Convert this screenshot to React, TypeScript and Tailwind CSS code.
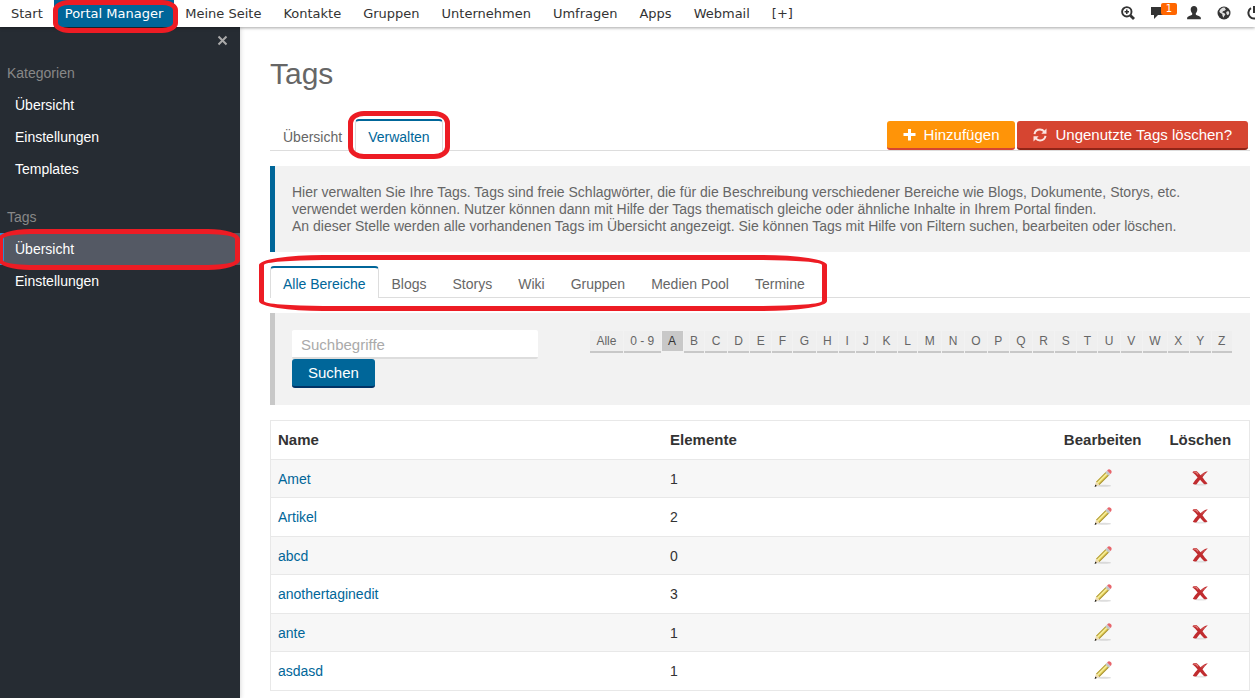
import clsx from "clsx";

const NAV_ITEMS = [
  "Start",
  "Portal Manager",
  "Meine Seite",
  "Kontakte",
  "Gruppen",
  "Unternehmen",
  "Umfragen",
  "Apps",
  "Webmail",
  "[+]",
];

const SIDEBAR_GROUPS = [
  { title: "Kategorien", items: ["Übersicht", "Einstellungen", "Templates"], active: "" },
  { title: "Tags", items: ["Übersicht", "Einstellungen"], active: "Übersicht" },
];

const AREAS = ["Alle Bereiche", "Blogs", "Storys", "Wiki", "Gruppen", "Medien Pool", "Termine"];

const LETTERS = ["Alle", "0 - 9", ..."ABCDEFGHIJKLMNOPQRSTUVWXYZ".split("")];

const TAGS = [
  { name: "Amet", count: 1 },
  { name: "Artikel", count: 2 },
  { name: "abcd", count: 0 },
  { name: "anothertaginedit", count: 3 },
  { name: "ante", count: 1 },
  { name: "asdasd", count: 1 },
];

// Red marker drawn around the steps the user has to click
function Marker({ className }: { className: string }) {
  return (
    <span
      className={clsx("pointer-events-none absolute z-20 border-5 border-[#ed1c24]", className)}
    />
  );
}

function SearchIcon() {
  return (
    <svg width="14" height="14" viewBox="0 0 14 14" fill="none" stroke="#333">
      <circle cx="5.8" cy="5.8" r="4.7" strokeWidth="1.9" />
      <path d="M3.6 5.8h4.4M5.8 3.6v4.4" strokeWidth="1.5" />
      <path d="M9.4 9.4l3.6 3.6" strokeWidth="2.8" />
    </svg>
  );
}

function CommentIcon() {
  return (
    <svg width="14" height="14" viewBox="0 0 14 14" fill="#333">
      <path d="M0 1h13v8H7l-4 4V9H0z" />
    </svg>
  );
}

function UserIcon() {
  return (
    <svg width="14" height="14" viewBox="0 0 14 14" fill="#333">
      <path d="M7 0c2 0 3.3 1.4 3.3 3.6 0 1.5-.6 2.9-1.5 3.7v1.2c0 .5 3 1.4 4.2 2.2.7.4.9 1 .9 2.600H.1c0-1.600.2-2.200.9-2.600C2.200 9.900 5.200 9 5.200 8.500V7.300C4.300 6.500 3.700 5.100 3.700 3.600 3.700 1.400 5 0 7 0z" />
    </svg>
  );
}

function GlobeIcon() {
  return (
    <svg width="14" height="14" viewBox="0 0 14 14">
      <circle cx="7" cy="7" r="6.500" fill="#333" />
      <path
        d="M6 1.500l2.500.3-.5 1 1 .6-1.500 1.300-1.500.5-.8 1.300 2 .6 1.200 1.300-1.300 1.800-.6 1.500-1-1.800-.3-1.900L3 6.800l-.7-1.300C2.900 3.600 4.200 2.200 6 1.500z"
        fill="#ddd"
      />
      <path d="M10 5.200l2 .2.2 2.300-1.200 1.600-1-.6-.9-1.900z" fill="#ddd" />
    </svg>
  );
}

function PowerIcon() {
  return (
    <svg width="14" height="14" viewBox="0 0 14 14" fill="none" stroke="#333" strokeWidth="2">
      <path d="M4 2.200a5.600 5.600 0 1 0 6 0M7 0v7" />
    </svg>
  );
}

function PlusIcon() {
  return (
    <svg width="13" height="13" viewBox="0 0 13 13" fill="#fff">
      <path d="M5 1h3v4h4.500v3H8v4.500H5V8H.5V5H5z" />
    </svg>
  );
}

function RefreshIcon() {
  return (
    <svg width="14" height="14" viewBox="0 0 14 14" fill="none" stroke="#fbe3df" strokeWidth="2">
      <path d="M1.500 6.200C2 3.300 4.300 1.600 7 1.600c1.900 0 3.300.8 4.300 2" />
      <path d="M12.500 7.800c-.5 2.900-2.800 4.600-5.500 4.600-1.900 0-3.300-.8-4.300-2" />
      <path d="M13.500.5v5.200H8.300z" fill="#fbe3df" stroke="none" />
      <path d="M.5 13.500V8.300h5.200z" fill="#fbe3df" stroke="none" />
    </svg>
  );
}

function PencilIcon() {
  return (
    <svg width="18" height="18" viewBox="0 0 18 18">
      <ellipse cx="10" cy="16.800" rx="7" ry="1" fill="#bbb" opacity="0.500" />
      <path d="M2 12.700L12 2.700l3.400 3.400L5.400 16z" fill="#e6d35c" />
      <path d="M2 12.700L12 2.700l.9.900L3 13.700z" fill="#b9a548" />
      <path d="M3 13.600L13 3.600l.8.800-10 10z" fill="#f8f0a0" />
      <path d="M4.700 15.300l10-10 .7.800-10 10z" fill="#a8923a" />
      <path d="M2 12.700l3.400 3.300-4.600 1.700z" fill="#ecd9ae" />
      <path d="M1.400 15.500l1.500 1.500-2.300.9z" fill="#111" />
      <path d="M11.300 3.400L13.100 1.600l3.400 3.400-1.800 1.800z" fill="#c3c8cc" />
      <path
        d="M13.100 1.600C14 .7 14.700.2 15.600.4c1.100.2 1.900 1.100 2 2 .1 1-.4 1.800-1.100 2.600z"
        fill="#e8656b"
      />
    </svg>
  );
}

function DeleteIcon() {
  return (
    <svg width="16" height="16" viewBox="0 0 16 16">
      <ellipse cx="9" cy="14.600" rx="6.500" ry="0.900" fill="#bbb" opacity="0.400" />
      <path
        d="M.4 2.300C1.400.8 3.700.7 5 1.400c1.300 1 2.500 2.400 3.500 3.900C10.300 3.300 12.900 1.500 15.800 1.200 13.600 3.100 11.900 5.200 10.500 7.300c1.400 2.100 3.100 4.200 5 6.300-1.200 1-2.900 1-3.800.1C10.400 12.300 9.200 11 8.100 9.700 6.800 11.300 5.600 12.900 4.600 14.200c-1.200.6-3 .5-3.800-.4C2 11.600 3.800 9.400 5.600 7.400 4.200 5.700 2.500 4.100.4 2.300z"
        fill="#c02c2f"
      />
      <path d="M1.600 2.300c1-.5 2-.4 2.800.2l1.800 1.900" fill="none" stroke="#de7f7c" strokeWidth="1.200" />
      <path d="M9.500 5.800L13 2.800" fill="none" stroke="#d46765" strokeWidth="0.800" />
    </svg>
  );
}

function Tab({ label, active }: { label: string; active?: boolean }) {
  return (
    <a
      href="#"
      className={clsx(
        "flex h-8 items-center whitespace-nowrap border-x border-t-2 px-3 pt-0.5",
        active
          ? "rounded-t border-x-[#ddd] border-t-[#006699] bg-white text-[#006699]"
          : "border-transparent text-[#666]"
      )}
    >
      {label}
    </a>
  );
}

function TopBar() {
  return (
    <header className="relative z-10 flex h-[27px] justify-between bg-white font-['DejaVu_Sans',Verdana,sans-serif] text-[13px] text-[#333] shadow-[0_1px_3px_rgba(0,0,0,0.35)]">
      <nav className="flex">
        {NAV_ITEMS.map((item) => {
          const active = item === "Portal Manager";
          return (
            <a
              key={item}
              href="#"
              className={clsx(
                "relative flex items-center whitespace-nowrap px-[11px] pt-0.5",
                active && "bg-[#006699] text-white"
              )}
            >
              {item}
              {active && (
                <Marker className="top-0 -right-1 -bottom-1.5 -left-px rounded-[16px/10px]" />
              )}
            </a>
          );
        })}
      </nav>
      <div className="flex items-center overflow-hidden pb-0.5">
        <div className="-mr-1.5 flex items-center gap-4">
          <button aria-label="Suche">
            <SearchIcon />
          </button>
          <button aria-label="Nachrichten" className="relative mr-1.5">
            <CommentIcon />
            <span className="absolute -top-[3px] left-[10px] h-3 w-4 rounded-xs bg-[#ff6600] text-center text-[10px] leading-3 text-white">
              1
            </span>
          </button>
          <button aria-label="Profil">
            <UserIcon />
          </button>
          <button aria-label="Sprache">
            <GlobeIcon />
          </button>
          <button aria-label="Abmelden">
            <PowerIcon />
          </button>
        </div>
      </div>
    </header>
  );
}

function Sidebar() {
  return (
    <aside className="w-60 shrink-0 bg-[#262c33] text-white shadow-[0_0_5px_rgba(0,0,0,0.2)]">
      <div className="flex h-[30px] items-center justify-end pr-3 pb-1">
        <button aria-label="Schließen">
          <svg width="11" height="11" viewBox="0 0 11 11" stroke="#aaa" strokeWidth="2">
            <path d="M1.500 1.500l8 8M9.500 1.500l-8 8" />
          </svg>
        </button>
      </div>
      <div className="flex flex-col gap-4">
        {SIDEBAR_GROUPS.map((group) => (
          <section key={group.title}>
            <h2 className="flex h-8 items-center px-[7px] text-[#888]">{group.title}</h2>
            <ul>
              {group.items.map((item) => {
                const active = item === group.active;
                return (
                  <li key={item} className="relative">
                    <a
                      href="#"
                      className={clsx(
                        "flex h-8 items-center border-l-4 pl-[11px]",
                        active ? "border-[#2a8fd0] bg-[#545964]" : "border-transparent"
                      )}
                    >
                      {item}
                    </a>
                    {active && (
                      <Marker className="-top-1 right-0 -bottom-[5px] -left-0.5 rounded-[32px/10px]" />
                    )}
                  </li>
                );
              })}
            </ul>
          </section>
        ))}
      </div>
    </aside>
  );
}

function FilterBox() {
  return (
    <form className="mt-[15px] flex items-start gap-[52px] border-l-5 border-[#c8c8c8] bg-[#f2f2f2] py-[17px] pr-[18px] pl-[17px]">
      <div className="w-[246px] shrink-0">
        <input
          type="text"
          aria-label="Suchbegriffe"
          placeholder="Suchbegriffe"
          className="block h-[29px] w-full rounded-xs border-b-2 border-[#ddd] bg-white px-[9px] pt-0.5 text-[15px] placeholder:text-[#aaa]"
        />
        <button
          type="button"
          className="block h-[29px] rounded-[3px] border-b-2 border-[#003366] bg-[#006699] px-4 text-[15px] text-white"
        >
          Suchen
        </button>
      </div>
      <ul className="mt-px flex flex-1 gap-px rounded-[3px] text-xs text-[#666]">
        {LETTERS.map((letter) => (
          <li key={letter} className="grow">
            <a
              href="#"
              className={clsx(
                "block whitespace-nowrap border-b-2 px-[5px] text-center leading-5",
                letter === "A"
                  ? "border-transparent bg-[#c8c8c8] bg-clip-padding text-[#333]"
                  : "border-[#c8c8c8] bg-[#efefef]"
              )}
            >
              {letter}
            </a>
          </li>
        ))}
      </ul>
    </form>
  );
}

function TagTable() {
  return (
    <table className="mt-[15px] w-full table-fixed border-collapse border border-[#e8e8e8] text-[#333]">
      <thead className="text-[15px]">
        <tr className="h-[39px]">
          <th className="w-2/5 px-[7px] text-left">Name</th>
          <th className="w-2/5 px-2 text-left">Elemente</th>
          <th className="w-1/10">Bearbeiten</th>
          <th className="w-1/10">Löschen</th>
        </tr>
      </thead>
      <tbody>
        {TAGS.map((tag) => (
          <tr
            key={tag.name}
            className="border-t border-[#e8e8e8] odd:h-[38px] odd:bg-[#f7f7f7] even:h-[39px]"
          >
            <td className="px-[7px]">
              <a href="#" className="text-[#006699]">
                {tag.name}
              </a>
            </td>
            <td className="px-2">{tag.count}</td>
            <td className="pb-0.5">
              <button aria-label="Bearbeiten" className="mx-auto block">
                <PencilIcon />
              </button>
            </td>
            <td className="pb-0.5">
              <button aria-label="Löschen" className="mx-auto block">
                <DeleteIcon />
              </button>
            </td>
          </tr>
        ))}
      </tbody>
    </table>
  );
}

export default function App() {
  return (
    <div className="flex min-h-screen flex-col bg-white font-['Liberation_Sans',Arial,sans-serif] text-sm">
      <TopBar />
      <div className="flex flex-1">
        <Sidebar />
        <main className="min-w-0 flex-1 pt-[29px] pr-[5px] pb-2 pl-[30px]">
          <h1 className="text-[30px] leading-9 text-[#666]">Tags</h1>

          <div className="mt-[27px] flex justify-between border-b border-[#ddd]">
            <div className="-mb-px flex">
              <Tab label="Übersicht" />
              <div className="relative">
                <Tab label="Verwalten" active />
                <Marker className="-inset-x-[7px] -inset-y-2 rounded-[16px/12px]" />
              </div>
            </div>
            <div className="mr-0.5 flex items-end gap-0.5 text-[15px] text-white">
              <button className="flex h-[29px] items-center gap-2 rounded-[3px] border-b-2 border-[#d64531] bg-[#ff9408] px-4">
                <PlusIcon />
                Hinzufügen
              </button>
              <button className="flex h-[29px] items-center gap-2 rounded-[3px] border-b-2 border-[#8f2417] bg-[#d64531] px-4">
                <RefreshIcon />
                Ungenutzte Tags löschen?
              </button>
            </div>
          </div>

          <p className="mt-[15px] border-l-5 border-[#006699] bg-[#f2f2f2] px-[17px] pt-[18px] pb-[17px] leading-[17px] text-[#666]">
            Hier verwalten Sie Ihre Tags. Tags sind freie Schlagwörter, die für die Beschreibung
            verschiedener Bereiche wie Blogs, Dokumente, Storys, etc.
            <br />
            verwendet werden können. Nutzer können dann mit Hilfe der Tags thematisch gleiche oder
            ähnliche Inhalte in Ihrem Portal finden.
            <br />
            An dieser Stelle werden alle vorhandenen Tags im Übersicht angezeigt. Sie können Tags mit
            Hilfe von Filtern suchen, bearbeiten oder löschen.
          </p>

          <div className="mt-3.5 flex border-b border-[#ddd]">
            <div className="relative -mb-px flex">
              {AREAS.map((area, i) => (
                <Tab key={area} label={area} active={i === 0} />
              ))}
              <Marker className="-top-[11px] -right-[9px] -bottom-[13px] -left-[11px] rounded-[64px/10px]" />
            </div>
          </div>

          <FilterBox />
          <TagTable />
        </main>
      </div>
    </div>
  );
}
